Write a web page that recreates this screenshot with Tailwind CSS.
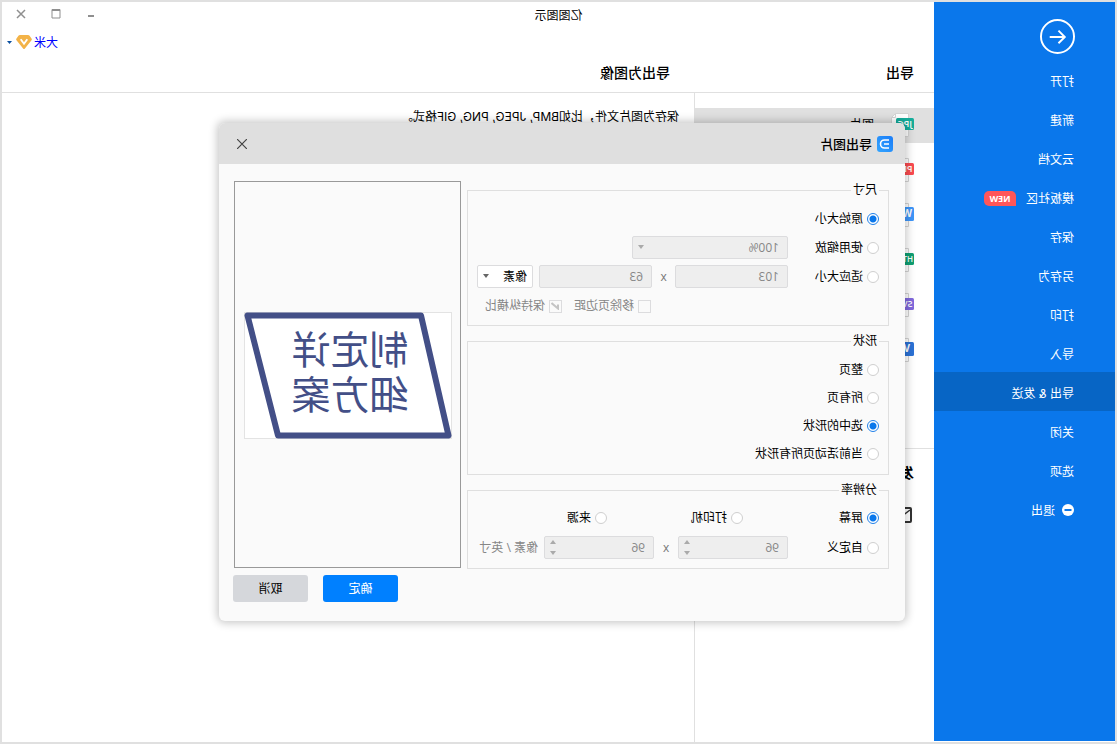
<!DOCTYPE html>
<html lang="zh-CN">
<head>
<meta charset="utf-8">
<title>亿图图示</title>
<script src="https://cdn.jsdelivr.net/npm/@tailwindcss/browser@4"></script>
</head>
<body class="bg-white">
<div class="relative flex min-h-screen -scale-x-100 border-2 border-[#e0e0e0] bg-white font-['Open_Sans','Noto_Sans_CJK_SC',sans-serif] text-xs leading-4 text-black">

  <!-- File menu -->
  <aside class="mb-px w-[181px] shrink-0 bg-[#0a77eb] font-['Inter','Noto_Sans_CJK_SC',sans-serif] text-white">
    <div class="flex h-[58px] items-center pt-2.5 pl-10">
      <button aria-label="返回" class="block">
        <svg width="35" height="35" viewBox="0 0 36 36" fill="none" stroke="#fff" stroke-width="2"><circle cx="18" cy="18" r="17"/><path d="M26 18.500H11M17 12l-6.500 6.500L17 25"/></svg>
      </button>
    </div>
    <nav>
      <a href="#" class="flex h-[39px] items-center pt-1 pl-[41px]">打开</a>
      <a href="#" class="flex h-[39px] items-center pt-1 pl-[41px]">新建</a>
      <a href="#" class="flex h-[39px] items-center pt-1 pl-[41px]">云文档</a>
      <a href="#" class="flex h-[39px] items-center gap-2.5 pt-1 pl-[41px]">模板社区<span class="flex h-[15px] w-8 items-center justify-center rounded-[5px] rounded-bl-none bg-[#ff5659] font-['Open_Sans',sans-serif] text-[9px] font-bold">NEW</span></a>
      <a href="#" class="flex h-[39px] items-center pt-1 pl-[41px]">保存</a>
      <a href="#" class="flex h-[39px] items-center pt-1 pl-[41px]">另存为</a>
      <a href="#" class="flex h-[39px] items-center pt-1 pl-[41px]">打印</a>
      <a href="#" class="flex h-[39px] items-center pt-1 pl-[41px]">导入</a>
      <a href="#" class="flex h-[39px] items-center bg-[#0765c5] pt-1 pl-[41px]">导出 &amp; 发送</a>
      <a href="#" class="flex h-[39px] items-center pt-1 pl-[41px]">关闭</a>
      <a href="#" class="flex h-[39px] items-center pt-1 pl-[41px]">选项</a>
      <a href="#" class="flex h-[39px] items-center gap-[7px] pt-1 pl-[41px]"><svg class="mb-0.5" width="12" height="12" viewBox="0 0 12 12"><circle cx="6" cy="6" r="6" fill="#fff"/><path d="M2.500 6h7" stroke="#0a77eb" stroke-width="2"/></svg>退出</a>
    </nav>
  </aside>

  <main class="flex min-w-0 grow flex-col">
    <header class="border-b border-[#e0e0e0]">
      <div class="flex h-[26px] items-center">
        <h1 class="grow pt-0.5 text-center">亿图图示</h1>
        <div class="flex w-[181px] justify-end pr-0.5 pb-0.5 text-[#8f8f8f]">
          <button aria-label="最小化" class="flex w-[35px] justify-center"><svg width="10" height="10" viewBox="0 0 10 10"><path d="M2 6h6v2H2z" fill="currentColor"/></svg></button>
          <button aria-label="最大化" class="flex w-[35px] justify-center"><svg width="10" height="10" viewBox="0 0 10 10" fill="none" stroke="currentColor"><path d="M1 .5h8v8.500H1zM1 1.500h8"/></svg></button>
          <button aria-label="关闭窗口" class="flex w-[35px] justify-center"><svg width="10" height="10" viewBox="0 0 10 10" stroke="currentColor" stroke-width="1.500"><path d="M1 1l8 8M9 1L1 9"/></svg></button>
        </div>
      </div>
      <div class="flex h-7 items-center justify-end pr-[5px]">
        <button class="flex items-center text-[#0000ff]"><span class="pt-0.5">大米</span>
          <svg class="mr-1 ml-0.5" width="16" height="15" viewBox="0 0 16 15"><path d="M4 0h8q1 0 1.600.8l1.900 2.700q.8 1-.2 2L8.700 13.700q-.7.800-1.400 0L.7 5.500q-1-1-.2-2L2.400.8Q3 0 4 0z" fill="#f3b348"/><path d="M4.700 4.200L8 8.800l3.300-4.600" fill="none" stroke="#fff" stroke-width="1.800"/></svg>
          <svg width="5" height="3" viewBox="0 0 5 3"><path d="M0 0h5L2.500 3z" fill="#0a4fa0"/></svg>
        </button>
      </div>
      <div class="flex h-9 items-center pb-0.5 text-sm font-medium">
        <h2 class="w-[244px] shrink-0 pl-5">导出</h2>
        <h2 class="pl-5">导出为图像</h2>
      </div>
    </header>

    <div class="flex grow">
      <section class="w-60 shrink-0 border-r border-[#e0e0e0] pt-[15px]">
        <ul class="flex flex-col gap-2.5">
          <li><a href="#" class="flex h-[35px] items-center gap-4 bg-[#e0e0e0] pb-0.5 pl-5"><svg width="24" height="26" viewBox="0 0 24 26"><path d="M5.500 1.500h13l4 4v19h-17z" fill="#fff" stroke="#d4d4d4"/><path d="M18.500 1.500v4h4" fill="none" stroke="#d4d4d4"/><rect y="6" width="18" height="12" rx="1.500" fill="#16ad9b"/><text x="2" y="15" font-size="9" font-weight="600" fill="#fff">JPG</text></svg>图片</a></li>
          <li><a href="#" aria-label="PDF" class="flex h-[35px] items-center pb-0.5 pl-5"><svg width="24" height="26" viewBox="0 0 24 26"><path d="M5.500 1.500h13l4 4v19h-17z" fill="#fff" stroke="#d4d4d4"/><rect y="6" width="18" height="12" rx="1.500" fill="#fa4b50"/><text x="1.500" y="15" font-size="9" font-weight="600" fill="#fff">PDF</text></svg></a></li>
          <li><a href="#" aria-label="Word" class="flex h-[35px] items-center pb-0.5 pl-5"><svg width="24" height="26" viewBox="0 0 24 26"><path d="M5.500 1.500h13l4 4v19h-17z" fill="#fff" stroke="#d4d4d4"/><rect y="5" width="14" height="14" rx="1.500" fill="#3e96fa"/><text x="2" y="15" font-size="10" font-weight="700" fill="#fff">W</text></svg></a></li>
          <li><a href="#" aria-label="HTML" class="flex h-[35px] items-center pb-0.5 pl-5"><svg width="24" height="26" viewBox="0 0 24 26"><path d="M5.500 1.500h13l4 4v19h-17z" fill="#fff" stroke="#d4d4d4"/><rect y="6" width="18" height="12" rx="1.500" fill="#0f9f72"/><text x="1" y="15" font-size="8" font-weight="600" fill="#fff">HTM</text></svg></a></li>
          <li><a href="#" aria-label="SVG" class="flex h-[35px] items-center pb-0.5 pl-5"><svg width="24" height="26" viewBox="0 0 24 26"><path d="M5.500 1.500h13l4 4v19h-17z" fill="#fff" stroke="#d4d4d4"/><rect y="6" width="18" height="12" rx="1.500" fill="#8169dd"/><text x="1.500" y="15" font-size="9" font-weight="600" fill="#fff">SV</text></svg></a></li>
          <li><a href="#" aria-label="Visio" class="flex h-[35px] items-center pb-0.5 pl-5"><svg width="24" height="26" viewBox="0 0 24 26"><path d="M5.500 1.500h13l4 4v19h-17z" fill="#fff" stroke="#d4d4d4"/><rect y="5" width="14" height="14" rx="1.500" fill="#2b72d6"/><text x="4" y="15" font-size="10" font-weight="700" fill="#fff">V</text></svg></a></li>
        </ul>
        <div class="mt-20 border-t border-[#e0e0e0] pt-3.5 pl-5">
          <h2 class="text-sm font-bold">发送</h2>
          <a href="#" aria-label="邮件" class="mt-6 ml-0.5 block"><svg width="20" height="16" viewBox="0 0 20 16" fill="none" stroke="#333" stroke-width="2"><rect x="1" y="1" width="18" height="14" rx="1"/><path d="M2 3l8 6 8-6" stroke-width="1.500"/></svg></a>
        </div>
      </section>
      <p class="pt-4 pl-[15px] font-['Inter','Noto_Sans_CJK_SC',sans-serif]">保存为图片文件，比如BMP, JPEG, PNG, GIF格式。</p>
    </div>
  </main>

  <!-- Export dialog -->
  <form role="dialog" aria-labelledby="dlg-title" class="absolute top-[121px] left-[210px] w-[686px] overflow-hidden rounded-md bg-[#fafafa] pb-[19px] shadow-[0_0_8px_2px_rgba(0,0,0,0.22)]">
    <div class="flex h-[41px] items-center bg-[#dfdfdf] pr-[18px] pl-3">
      <svg width="16" height="16" viewBox="0 0 16 16"><defs><linearGradient id="lg" x1="0" y1="0" x2="1" y2="1"><stop offset="0" stop-color="#1a7cf7"/><stop offset="1" stop-color="#33a5ff"/></linearGradient></defs><rect width="16" height="16" rx="3" fill="url(#lg)"/><path d="M4 4h4.500a4 4 0 0 1 0 8H4M4 8h5" fill="none" stroke="#fff" stroke-width="1.600"/></svg>
      <h2 id="dlg-title" class="grow pl-[5px] text-[13px] font-medium">导出图片</h2>
      <button type="button" aria-label="关闭"><svg width="10" height="10" viewBox="0 0 10 10" stroke="#444" stroke-width="1.200"><path d="M0 0l10 10M10 0L0 10"/></svg></button>
    </div>

    <div class="flex gap-1.5 pt-[17px] pr-[15px] pl-4">
      <div class="mt-px flex w-[422px] flex-col gap-[7px]">
        <fieldset class="border border-[#dfdfdf] px-[9px] pb-[11px]">
          <legend class="px-0.5">尺寸</legend>
          <div class="flex flex-col gap-1.5 pt-[9px]">
            <div class="flex h-[23px] items-center">
              <label class="flex items-center gap-1"><input type="radio" name="size" checked class="size-3 appearance-none rounded-full border border-[#cfcfcf] bg-white checked:border-[#1f80ea] checked:bg-[radial-gradient(#0a77eb_0_3px,white_4px)]">原始大小</label>
            </div>
            <div class="flex h-[23px] items-center">
              <label class="flex w-[91px] items-center gap-1"><input type="radio" name="size" class="size-3 appearance-none rounded-full border border-[#cfcfcf] bg-white">使用缩放</label>
              <div class="relative">
                <select aria-label="缩放比例" disabled class="block h-[23px] w-[156px] appearance-none rounded-xs border border-[#dcdcde] bg-[#eee] pl-2 text-[#868686] opacity-100"><option>100%</option></select>
                <svg class="absolute top-[9px] right-1.5" width="6" height="4" viewBox="0 0 6 4"><path d="M0 0h6L3 4z" fill="#aaa"/></svg>
              </div>
            </div>
            <div class="flex h-[23px] items-center">
              <label class="flex w-[91px] items-center gap-1"><input type="radio" name="size" class="size-3 appearance-none rounded-full border border-[#cfcfcf] bg-white">适应大小</label>
              <input aria-label="宽度" value="103" disabled class="h-[23px] w-[113px] rounded-xs border border-[#dcdcde] bg-[#eee] pl-2 text-[#868686]">
              <span class="w-[23px] text-center text-[#777]">x</span>
              <input aria-label="高度" value="63" disabled class="h-[23px] w-[113px] rounded-xs border border-[#dcdcde] bg-[#eee] pl-2 text-[#868686]">
              <div class="relative ml-1.5">
                <select aria-label="单位" class="block h-[23px] w-14 appearance-none rounded-xs border border-[#dcdcde] bg-white pl-[5px]"><option>像素</option></select>
                <svg class="absolute top-[9px] right-1.5" width="6" height="4" viewBox="0 0 6 4"><path d="M0 0h6L3 4z" fill="#666"/></svg>
              </div>
            </div>
          </div>
          <div class="mt-2.5 flex h-4 items-center gap-3 pl-[228px] text-[#868686]">
            <label class="flex items-center gap-1"><input type="checkbox" disabled class="size-[13px] appearance-none border border-[#dcdcde] bg-[#fafafa]">移除页边距</label>
            <label class="relative flex items-center gap-1"><input type="checkbox" checked disabled class="size-[13px] appearance-none border border-[#dcdcde] bg-[#fafafa]"><svg class="absolute left-[3px]" width="8" height="8" viewBox="0 0 8 8" fill="none" stroke="#c4c4c4" stroke-width="2"><path d="M1 2.500V6.500L7.500 1"/></svg>保持纵横比</label>
          </div>
        </fieldset>

        <fieldset class="border border-[#dfdfdf] px-[9px] pb-2.5">
          <legend class="px-0.5">形状</legend>
          <div class="flex flex-col items-start gap-2 pt-[11px]">
            <label class="flex h-5 items-center gap-1"><input type="radio" name="shape" class="size-3 appearance-none rounded-full border border-[#cfcfcf] bg-white">整页</label>
            <label class="flex h-5 items-center gap-1"><input type="radio" name="shape" class="size-3 appearance-none rounded-full border border-[#cfcfcf] bg-white">所有页</label>
            <label class="flex h-5 items-center gap-1"><input type="radio" name="shape" checked class="size-3 appearance-none rounded-full border border-[#cfcfcf] bg-white checked:border-[#1f80ea] checked:bg-[radial-gradient(#0a77eb_0_3px,white_4px)]">选中的形状</label>
            <label class="flex h-5 items-center gap-1"><input type="radio" name="shape" class="size-3 appearance-none rounded-full border border-[#cfcfcf] bg-white">当前活动页所有形状</label>
          </div>
        </fieldset>

        <fieldset class="border border-[#dfdfdf] px-[9px] pb-[9px]">
          <legend class="px-0.5">分辨率</legend>
          <div class="flex h-[30px] items-center pt-2.5">
            <label class="flex w-[136px] items-center gap-1"><input type="radio" name="dpi" checked class="size-3 appearance-none rounded-full border border-[#cfcfcf] bg-white checked:border-[#1f80ea] checked:bg-[radial-gradient(#0a77eb_0_3px,white_4px)]">屏幕</label>
            <label class="flex w-[136px] items-center gap-1"><input type="radio" name="dpi" class="size-3 appearance-none rounded-full border border-[#cfcfcf] bg-white">打印机</label>
            <label class="flex items-center gap-1"><input type="radio" name="dpi" class="size-3 appearance-none rounded-full border border-[#cfcfcf] bg-white">来源</label>
          </div>
          <div class="mt-2 flex h-[23px] items-center">
            <label class="flex w-[91px] items-center gap-1"><input type="radio" name="dpi" class="size-3 appearance-none rounded-full border border-[#cfcfcf] bg-white">自定义</label>
            <div class="relative">
              <input aria-label="水平分辨率" value="96" disabled class="block h-[23px] w-[110px] rounded-xs border border-[#dcdcde] bg-[#eee] pl-2 text-[#868686]">
              <svg class="absolute top-1 right-1.5" width="6" height="15" viewBox="0 0 6 15"><path d="M0 4h6L3 0zM0 11h6l-3 4z" fill="#aaa"/></svg>
            </div>
            <span class="w-6 text-center text-[#777]">x</span>
            <div class="relative">
              <input aria-label="垂直分辨率" value="96" disabled class="block h-[23px] w-[110px] rounded-xs border border-[#dcdcde] bg-[#eee] pl-2 text-[#868686]">
              <svg class="absolute top-1 right-1.5" width="6" height="15" viewBox="0 0 6 15"><path d="M0 4h6L3 0zM0 11h6l-3 4z" fill="#aaa"/></svg>
            </div>
            <span class="pl-1.5 whitespace-nowrap text-[#868686]">像素 / 英寸</span>
          </div>
        </fieldset>
      </div>

      <div class="mb-px flex grow items-center justify-center border border-[#999] pt-0.5 pr-0.5">
        <svg width="208" height="127" viewBox="0 0 208 127">
          <rect x=".5" y=".5" width="207" height="126" fill="#fff" stroke="#e3e3e3"/>
          <path d="M204.500 3.500H31L3.500 123.500H174z" fill="#fff" stroke="#434f87" stroke-width="6" stroke-linejoin="round"/>
          <text text-anchor="middle" font-size="39" fill="#434f87"><tspan x="102" y="52">制定详</tspan><tspan x="102" y="97">细方案</tspan></text>
        </svg>
      </div>
    </div>

    <div class="mt-1.5 flex justify-end gap-[15px] pr-3.5">
      <button type="button" class="h-[27px] w-[75px] rounded-[3px] bg-[#0080ff] text-white">确定</button>
      <button type="button" class="h-[27px] w-[75px] rounded-[3px] bg-[#d5d7db]">取消</button>
    </div>
  </form>
</div>
</body>
</html>
